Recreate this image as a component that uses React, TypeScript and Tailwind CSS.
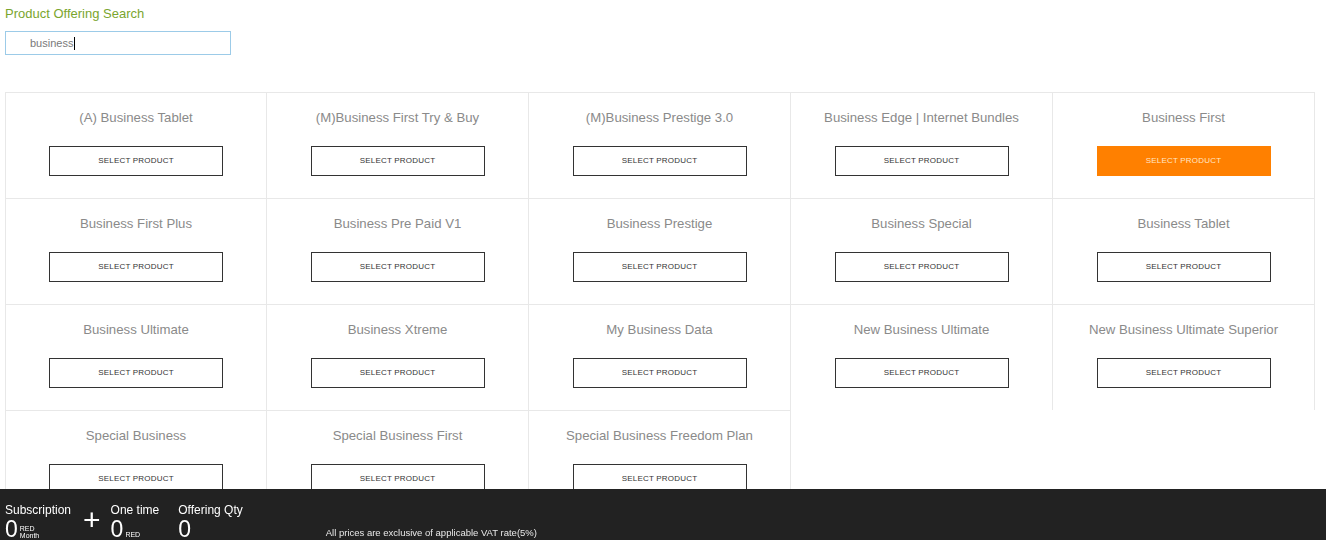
import React from 'react';

const PRODUCTS = [
  '(A) Business Tablet',
  '(M)Business First Try & Buy',
  '(M)Business Prestige 3.0',
  'Business Edge | Internet Bundles',
  'Business First',
  'Business First Plus',
  'Business Pre Paid V1',
  'Business Prestige',
  'Business Special',
  'Business Tablet',
  'Business Ultimate',
  'Business Xtreme',
  'My Business Data',
  'New Business Ultimate',
  'New Business Ultimate Superior',
  'Special Business',
  'Special Business First',
  'Special Business Freedom Plan',
];

const font = "font-['Liberation_Sans',Arial,sans-serif]";

const ProductCard: React.FC<{ name: string; index: number }> = ({ name, index }) => {
  const active = name === 'Business First';
  return (
    <div
      className={`h-[106px] flex flex-col items-center border-t border-r border-[#e8e8e8] ${
        index % 5 === 0 ? 'border-l' : ''
      }`}
    >
      <div className="mt-[15px] h-[20px] text-[13.2px] leading-[20px] text-[#8a8a8a] whitespace-nowrap">
        {name}
      </div>
      <button
        className={`mt-[18px] w-[174px] h-[30px] text-[8px] uppercase tracking-[0.2px] ${
          active
            ? 'bg-[#ff8000] text-[#ffe6c8] border border-[#ff8000]'
            : 'bg-white text-[#333] border border-[#333]'
        }`}
      >
        Select Product
      </button>
    </div>
  );
};

export default function App() {
  return (
    <div className={`min-h-screen bg-white pb-[30px] ${font}`}>
      <div className="pl-[5px] pt-[5px]">
        <div className="text-[13px] leading-[18px] text-[#7aa52e]">Product Offering Search</div>
        <div className="mt-[8px] w-[226px] h-[24px] border border-[#9ccbe8] flex items-center pl-[24px] text-[11px] text-[#7a7a7a]">
          business
          <span className="inline-block w-[1px] h-[13px] bg-black ml-[1px]" />
        </div>
      </div>

      <div className="mt-[37px] ml-[5px] w-[1310px] grid grid-cols-5">
        {PRODUCTS.map((p, i) => (
          <ProductCard key={p} name={p} index={i} />
        ))}
      </div>

      <div className="fixed bottom-0 left-0 right-0 h-[51px] bg-[#222] text-white flex items-start pl-[5px] pt-[15px]">
        <div className="flex flex-col">
          <span className="text-[12px] leading-[13px]">Subscription</span>
          <div className="flex items-end mt-[2px]">
            <span className="text-[23px] leading-[20px]">0</span>
            <span className="flex flex-col text-[7px] leading-[7px] ml-[2px]">
              <span>RED</span>
              <span>Month</span>
            </span>
          </div>
        </div>
        <span className="ml-[12px] mt-[1px] text-[30px] leading-[30px] font-light">+</span>
        <div className="flex flex-col ml-[10px]">
          <span className="text-[12px] leading-[13px]">One time</span>
          <div className="flex items-end mt-[2px]">
            <span className="text-[23px] leading-[20px]">0</span>
            <span className="text-[7px] leading-[7px] ml-[2px] mb-[1px]">RED</span>
          </div>
        </div>
        <div className="flex flex-col ml-[19px]">
          <span className="text-[12px] leading-[13px]">Offering Qty</span>
          <span className="mt-[2px] text-[23px] leading-[20px]">0</span>
        </div>
        <span className="ml-[83px] mt-[23px] text-[9.5px] leading-[12px] text-[#e8e8e8]">
          All prices are exclusive of applicable VAT rate(5%)
        </span>
      </div>
    </div>
  );
}
